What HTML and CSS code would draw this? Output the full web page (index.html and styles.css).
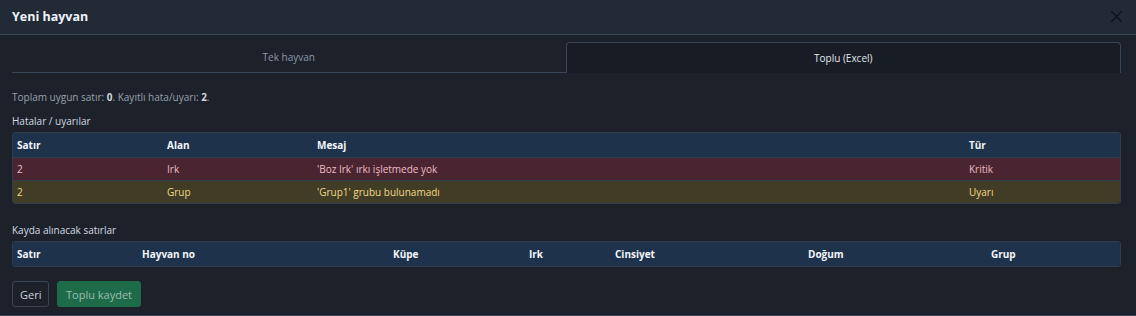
FILE: index.html
```html
<!DOCTYPE html>
<html lang="tr">
<head>
<meta charset="utf-8">
<title>Yeni hayvan</title>
<link rel="stylesheet" href="styles.css">
</head>
<body>
<div class="modal">
  <div class="modal-header">
    <h1 class="modal-title">Yeni hayvan</h1>
    <button class="close" aria-label="Kapat">
      <svg width="13" height="13" viewBox="0 0 13 13"><path d="M1 1L12 12M12 1L1 12" stroke="#0e1116" stroke-width="1.3" fill="none"/></svg>
    </button>
  </div>
  <div class="modal-body">
    <div class="tabs">
      <div class="tab">Tek hayvan</div>
      <div class="tab active">Toplu (Excel)</div>
    </div>
    <p class="summary">Toplam uygun satır: <b>0</b>. Kayıtlı hata/uyarı: <b>2</b>.</p>
    <div class="section-label">Hatalar / uyarılar</div>
    <div class="table-wrap">
      <table class="tbl errors">
        <thead>
          <tr><th class="c1">Satır</th><th class="c2">Alan</th><th class="c3">Mesaj</th><th>Tür</th></tr>
        </thead>
        <tbody>
          <tr class="danger"><td>2</td><td>Irk</td><td>'Boz Irk' ırkı işletmede yok</td><td>Kritik</td></tr>
          <tr class="warning"><td>2</td><td>Grup</td><td>'Grup1' grubu bulunamadı</td><td>Uyarı</td></tr>
        </tbody>
      </table>
    </div>
    <div class="section-label second">Kayda alınacak satırlar</div>
    <div class="table-wrap">
      <table class="tbl rows">
        <thead>
          <tr><th class="r1">Satır</th><th class="r2">Hayvan no</th><th class="r3">Küpe</th><th class="r4">Irk</th><th class="r5">Cinsiyet</th><th class="r6">Doğum</th><th>Grup</th></tr>
        </thead>
      </table>
    </div>
    <div class="actions">
      <button class="btn btn-outline">Geri</button>
      <button class="btn btn-success" disabled>Toplu kaydet</button>
    </div>
  </div>
</div>
</body>
</html>
```
FILE: styles.css
```css
* { box-sizing: border-box; }
html, body {
  margin: 0;
  padding: 0;
  background: #1c212a;
  font-family: "Open Sans", "Noto Sans", sans-serif;
  font-size: 10px;
  color: #c7ced8;
}
.modal {
  width: 1136px;
  height: 316px;
  background: #1c212a;
  border-bottom: 1px solid #3a4452;
}
.modal-header {
  height: 35px;
  background: #222a36;
  border-bottom: 1px solid #36475c;
  display: flex;
  align-items: center;
  justify-content: space-between;
  padding: 0 13px 1px 12px;
}
.modal-title {
  margin: 0;
  font-size: 12.5px;
  font-weight: 700;
  color: #eef3fa;
}
.close {
  background: none;
  border: 0;
  padding: 0;
  width: 13px;
  height: 13px;
  display: flex;
}
.modal-body {
  padding: 7px 15px 0 12px;
}
.tabs {
  display: flex;
  height: 31px;
}
.tab {
  flex: 1;
  display: flex;
  align-items: center;
  justify-content: center;
  color: #8e98a6;
  border-bottom: 1px solid #36475c;
}
.tab.active {
  color: #e4e9ef;
  background: #181c24;
  border: 1px solid #36475c;
  border-bottom: 0;
  border-radius: 4px 4px 0 0;
}
.summary {
  margin: 17px 0 0;
  color: #9aa2ad;
  line-height: 14px;
}
.summary b { color: #cfd6df; }
.section-label {
  margin-top: 10px;
  color: #d4dae2;
  line-height: 14px;
}
.section-label.second { margin-top: 19px; }
.table-wrap {
  margin-top: 4px;
  border: 1px solid #2f3d4f;
  border-radius: 3px;
  overflow: hidden;
}
.tbl {
  width: 100%;
  border-collapse: collapse;
  table-layout: fixed;
}
.tbl th, .tbl td {
  text-align: left;
  padding: 0 4px;
  height: 24px;
  white-space: nowrap;
}
.tbl th {
  background: #1e334b;
  color: #f2f6fb;
  font-weight: 700;
}
.tbl tbody td { border-top: 1px solid #2f3d4f; height: 23px; }
.errors .c1, .errors .c2 { width: 150px; }
.errors .c3 { width: 652px; }
.danger td { background: #4a2531; color: #f0bcc6; }
.warning td { background: #413c26; color: #f3da88; }
.rows .r1 { width: 125px; }
.rows .r2 { width: 251px; }
.rows .r3 { width: 136px; }
.rows .r4 { width: 86px; }
.rows .r5 { width: 193px; }
.rows .r6 { width: 183px; }
.actions {
  display: flex;
  gap: 8px;
  margin-top: 14px;
}
.btn {
  font-family: inherit;
  font-size: 11px;
  height: 26px;
  border-radius: 3px;
  padding: 0 7px;
}
.btn-outline {
  background: transparent;
  border: 1px solid #3a4656;
  color: #c9d0d9;
  width: 37px;
}
.btn-success {
  background: #1e6b4a;
  border: 1px solid #1e6b4a;
  color: #9dbdae;
  width: 84px;
}
```
